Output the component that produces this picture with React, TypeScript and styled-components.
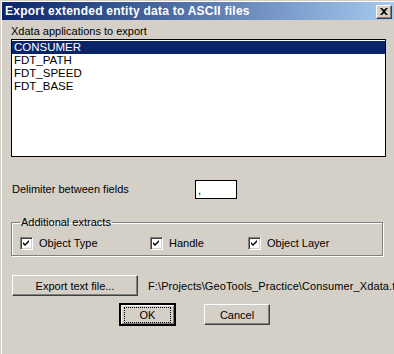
import React from 'react'
import styled, { createGlobalStyle } from 'styled-components'

const Global = createGlobalStyle`
  html, body { margin: 0; padding: 0; background: #d4d0c8; }
  body { font-family: "Liberation Sans", Arial, sans-serif; font-size: 11px; color: #000; }
`

const Window = styled.div`
  width: 394px;
  height: 354px;
  box-sizing: border-box;
  background: #d4d0c8;
  border-top: 1px solid #d4d0c8;
  border-left: 1px solid #d4d0c8;
  box-shadow: inset 1px 1px #fff;
  padding: 1px 0 0 1px;
  overflow: hidden;
`

const TitleBar = styled.div`
  height: 18px;
  display: flex;
  align-items: center;
  justify-content: space-between;
  padding: 0 2px 0 3px;
  background: linear-gradient(to right, #0a246a, #a6caf0);
`

const TitleText = styled.span`
  color: #fff;
  font-weight: bold;
  font-size: 12px;
  letter-spacing: 0.25px;
  white-space: nowrap;
`

const Bevel = styled.button`
  font-family: "Liberation Sans", Arial, sans-serif;
  font-size: 11px;
  color: #000;
  background: #d4d0c8;
  box-sizing: border-box;
  border: 1px solid;
  border-color: #fff #404040 #404040 #fff;
  box-shadow: inset -1px -1px #808080;
  padding: 0;
  display: flex;
  align-items: center;
  justify-content: center;
`

const CloseButton = styled(Bevel)`
  width: 16px;
  height: 14px;
  margin-top: 1px;
`

const Body = styled.div`
  padding: 5px 8px 0 9px;
`

const Label = styled.div`
  line-height: 13px;
  white-space: nowrap;
`

const ListBox = styled.div`
  margin-top: 1px;
  width: 375px;
  height: 118px;
  box-sizing: border-box;
  border: 1px solid #000;
  background: #fff;
  padding: 1px 0 0 0;
`

const ListItem = styled.div<{ $selected?: boolean }>`
  height: 13px;
  line-height: 13px;
  padding-left: 2px;
  font-size: 11.5px;
  background: ${p => (p.$selected ? '#0a246a' : 'transparent')};
  color: ${p => (p.$selected ? '#fff' : '#000')};
`

const DelimRow = styled.div`
  display: flex;
  align-items: center;
  height: 19px;
  margin-top: 23px;
  padding-left: 1px;
`

const DelimLabel = styled(Label)`
  width: 183px;
`

const TextBox = styled.div`
  width: 42px;
  height: 19px;
  box-sizing: border-box;
  border: 1px solid #000;
  background: #fff;
  padding: 3px 0 0 2px;
  line-height: 13px;
`

const Group = styled.fieldset`
  margin: 17px 0 0 0;
  width: 372px;
  box-sizing: border-box;
  height: 40px;
  border: 1px solid #808080;
  box-shadow: inset 1px 1px #fff, 1px 1px #fff;
  padding: 0 0 0 8px;
`

const Legend = styled.legend`
  padding: 0 1px;
  line-height: 13px;
`

const CheckRow = styled.div`
  display: grid;
  grid-template-columns: 130px 98px 1fr;
  margin-top: 8px;
`

const CheckItem = styled.label`
  display: flex;
  align-items: center;
  gap: 6px;
  line-height: 13px;
`

const CheckBox = styled.span`
  width: 13px;
  height: 13px;
  box-sizing: border-box;
  border: 1px solid;
  border-color: #808080 #fff #fff #808080;
  box-shadow: inset 1px 1px #404040, inset -1px -1px #d4d0c8;
  background: #fff;
  display: flex;
  align-items: center;
  justify-content: center;
`

const ExportRow = styled.div`
  display: flex;
  align-items: center;
  gap: 10px;
  margin-top: 19px;
  padding-left: 1px;
`

const ExportButton = styled(Bevel)`
  width: 126px;
  height: 21px;
  flex-shrink: 0;
`

const PathText = styled.span`
  white-space: nowrap;
  letter-spacing: 0.1px;
`

const ButtonRow = styled.div`
  display: flex;
  justify-content: center;
  align-items: center;
  gap: 28px;
  margin-top: 7px;
  padding-right: 8px;
`

const DefaultButton = styled(Bevel)`
  width: 57px;
  height: 23px;
  border-width: 2px;
  border-color: #000;
  box-shadow: inset 1px 1px #fff, inset -1px -1px #808080;
`

const FocusRect = styled.span`
  border: 1px dotted #000;
  padding: 1px 15px;
  line-height: 12px;
`

const CancelButton = styled(Bevel)`
  width: 66px;
  height: 21px;
`

const Check = () => (
  <svg width="7" height="7" viewBox="0 0 7 7">
    <path d="M0 2 L2 4 L6 0 L6 2 L2 6 L0 4 Z" fill="#000" />
  </svg>
)

const items = ['CONSUMER', 'FDT_PATH', 'FDT_SPEED', 'FDT_BASE']

export default function App() {
  return (
    <Window>
      <Global />
      <TitleBar>
        <TitleText>Export extended entity data to ASCII files</TitleText>
        <CloseButton>
          <svg width="8" height="7" viewBox="0 0 8 7">
            <path d="M0 0 L2 0 L4 2 L6 0 L8 0 L5 3.5 L8 7 L6 7 L4 5 L2 7 L0 7 L3 3.5 Z" fill="#000" />
          </svg>
        </CloseButton>
      </TitleBar>
      <Body>
        <Label>Xdata applications to export</Label>
        <ListBox>
          {items.map((it, i) => (
            <ListItem key={it} $selected={i === 0}>{it}</ListItem>
          ))}
        </ListBox>
        <DelimRow>
          <DelimLabel>Delimiter between fields</DelimLabel>
          <TextBox>,</TextBox>
        </DelimRow>
        <Group>
          <Legend>Additional extracts</Legend>
          <CheckRow>
            <CheckItem><CheckBox><Check /></CheckBox>Object Type</CheckItem>
            <CheckItem><CheckBox><Check /></CheckBox>Handle</CheckItem>
            <CheckItem><CheckBox><Check /></CheckBox>Object Layer</CheckItem>
          </CheckRow>
        </Group>
        <ExportRow>
          <ExportButton>Export text file...</ExportButton>
          <PathText>F:\Projects\GeoTools_Practice\Consumer_Xdata.t</PathText>
        </ExportRow>
        <ButtonRow>
          <DefaultButton><FocusRect>OK</FocusRect></DefaultButton>
          <CancelButton>Cancel</CancelButton>
        </ButtonRow>
      </Body>
    </Window>
  )
}
